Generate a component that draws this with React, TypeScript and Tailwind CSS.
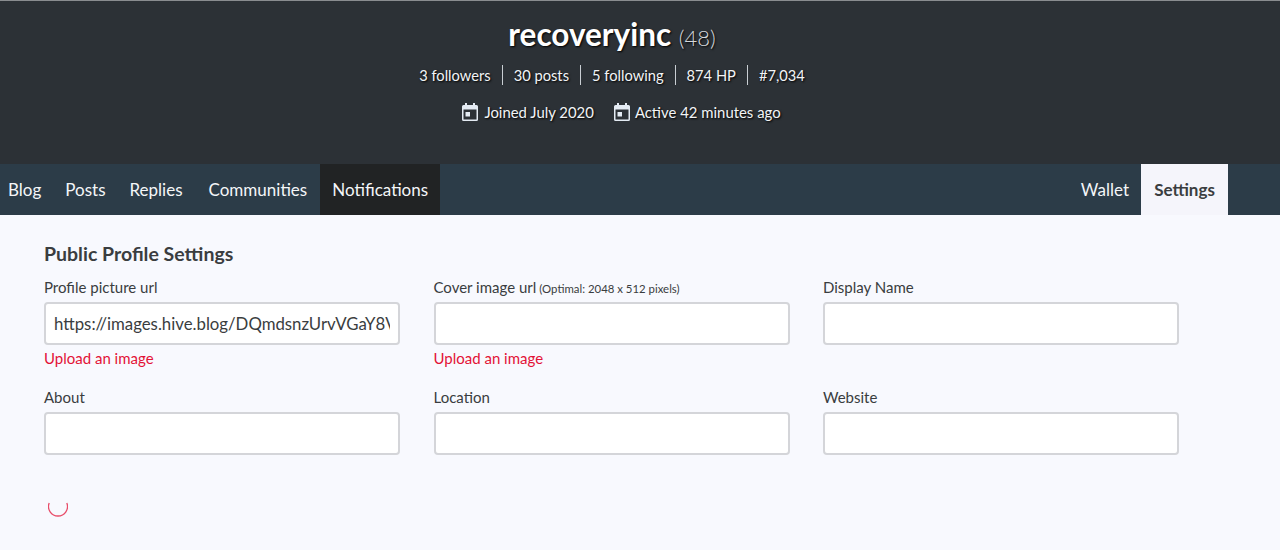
import React from 'react';

const font = { fontFamily: '"Lato", "Noto Sans", sans-serif' };

function CalendarIcon() {
  return (
    <svg viewBox="0 0 16 18" className="w-[16px] h-[18px] fill-[#e4ebf3]">
      <path d="M3 0h2v2h6V0h2v2h1.5A1.5 1.5 0 0 1 16 3.5v13a1.5 1.5 0 0 1-1.5 1.5h-13A1.5 1.5 0 0 1 0 16.5v-13A1.5 1.5 0 0 1 1.5 2H3zM1.5 6.5v10h13v-10zM3.5 9H8v4.5H3.5z" fillRule="evenodd" />
    </svg>
  );
}

function Divider() {
  return <span className="w-px h-[20px] bg-[#c9ced3] mx-[11px]" />;
}

function Field({ label, hint, value, upload }: { label: string; hint?: string; value?: string; upload?: boolean }) {
  return (
    <div className="w-[356px]">
      <div className="h-[25px] text-[15px] leading-[20px] text-[#3a3d40] whitespace-nowrap">
        {label}
        {hint && <span className="text-[11.4px] ml-[3px]">{hint}</span>}
      </div>
      <input
        readOnly
        value={value ?? ''}
        className="block w-full h-[43px] bg-white border-2 border-[#d4d5d9] rounded-[4px] px-[8px] text-[16.8px] text-[#3a3d40] outline-none"
      />
      {upload && <div className="mt-[3px] h-[39px] text-[15px] leading-[20px] text-[#e31337]">Upload an image</div>}
    </div>
  );
}

export default function App() {
  return (
    <div className="h-[550px] overflow-hidden bg-[#f8f9fe]" style={font}>
      <header className="h-[164px] pr-[56px] bg-[#2c3136] border-t border-[#8a8d90] text-white flex flex-col items-center [text-shadow:1px_1px_2px_#000]">
        <h1 className="mt-[13px] h-[40px] text-[31.5px] leading-[40px] font-bold">
          recoveryinc <span className="text-[22px] font-light text-[#d5d8db]">(48)</span>
        </h1>
        <div className="mt-[10px] flex items-center text-[14.7px] text-[#f2f4f6]">
          <span>3 followers</span>
          <Divider />
          <span>30 posts</span>
          <Divider />
          <span>5 following</span>
          <Divider />
          <span>874 HP</span>
          <Divider />
          <span>#7,034</span>
        </div>
        <div className="mt-[15px] ml-[19px] flex items-center text-[14.9px] text-[#f2f4f6]">
          <CalendarIcon />
          <span className="ml-[6px]">Joined July 2020</span>
          <span className="ml-[20px]"><CalendarIcon /></span>
          <span className="ml-[5px]">Active 42 minutes ago</span>
        </div>
      </header>

      <nav className="h-[51px] bg-[#2c3c48] flex justify-between text-[17px] text-[#f4f6f8]">
        <div className="flex">
          <a className="pl-2 pr-3 pt-px flex items-center">Blog</a>
          <a className="px-3 pt-px flex items-center">Posts</a>
          <a className="pl-3 pr-[13px] pt-px flex items-center">Replies</a>
          <a className="pl-[13px] pr-[13px] pt-px flex items-center">Communities</a>
          <a className="w-[120px] pt-px justify-center bg-[#212324] flex items-center">Notifications</a>
        </div>
        <div className="flex mr-[52px]">
          <a className="px-3 pt-px flex items-center">Wallet</a>
          <a className="w-[87px] pt-px justify-center flex items-center bg-[#f5f5fb] text-[#3a3d40] font-bold">Settings</a>
        </div>
      </nav>

      <main className="pl-[44px] pt-[26px]">
        <h2 className="h-[36px] text-[19.5px] leading-[26px] font-bold text-[#3a3d40]">Public Profile Settings</h2>
        <div className="grid grid-cols-[356px_356px_356px] gap-x-[33.5px]">
          <Field label="Profile picture url" value="https://images.hive.blog/DQmdsnzUrvVGaY8V" upload />
          <Field label="Cover image url" hint="(Optimal: 2048 x 512 pixels)" upload />
          <Field label="Display Name" />
          <Field label="About" />
          <Field label="Location" />
          <Field label="Website" />
        </div>
        <svg viewBox="0 0 20 15" className="ml-[4px] mt-[47px] w-[20px] h-[15px] fill-none stroke-[#e31337] opacity-75">
          <path d="M1.2 .9A9.5 9.5 0 1 0 18.8 .9" strokeWidth="1.3" />
        </svg>
      </main>
    </div>
  );
}
